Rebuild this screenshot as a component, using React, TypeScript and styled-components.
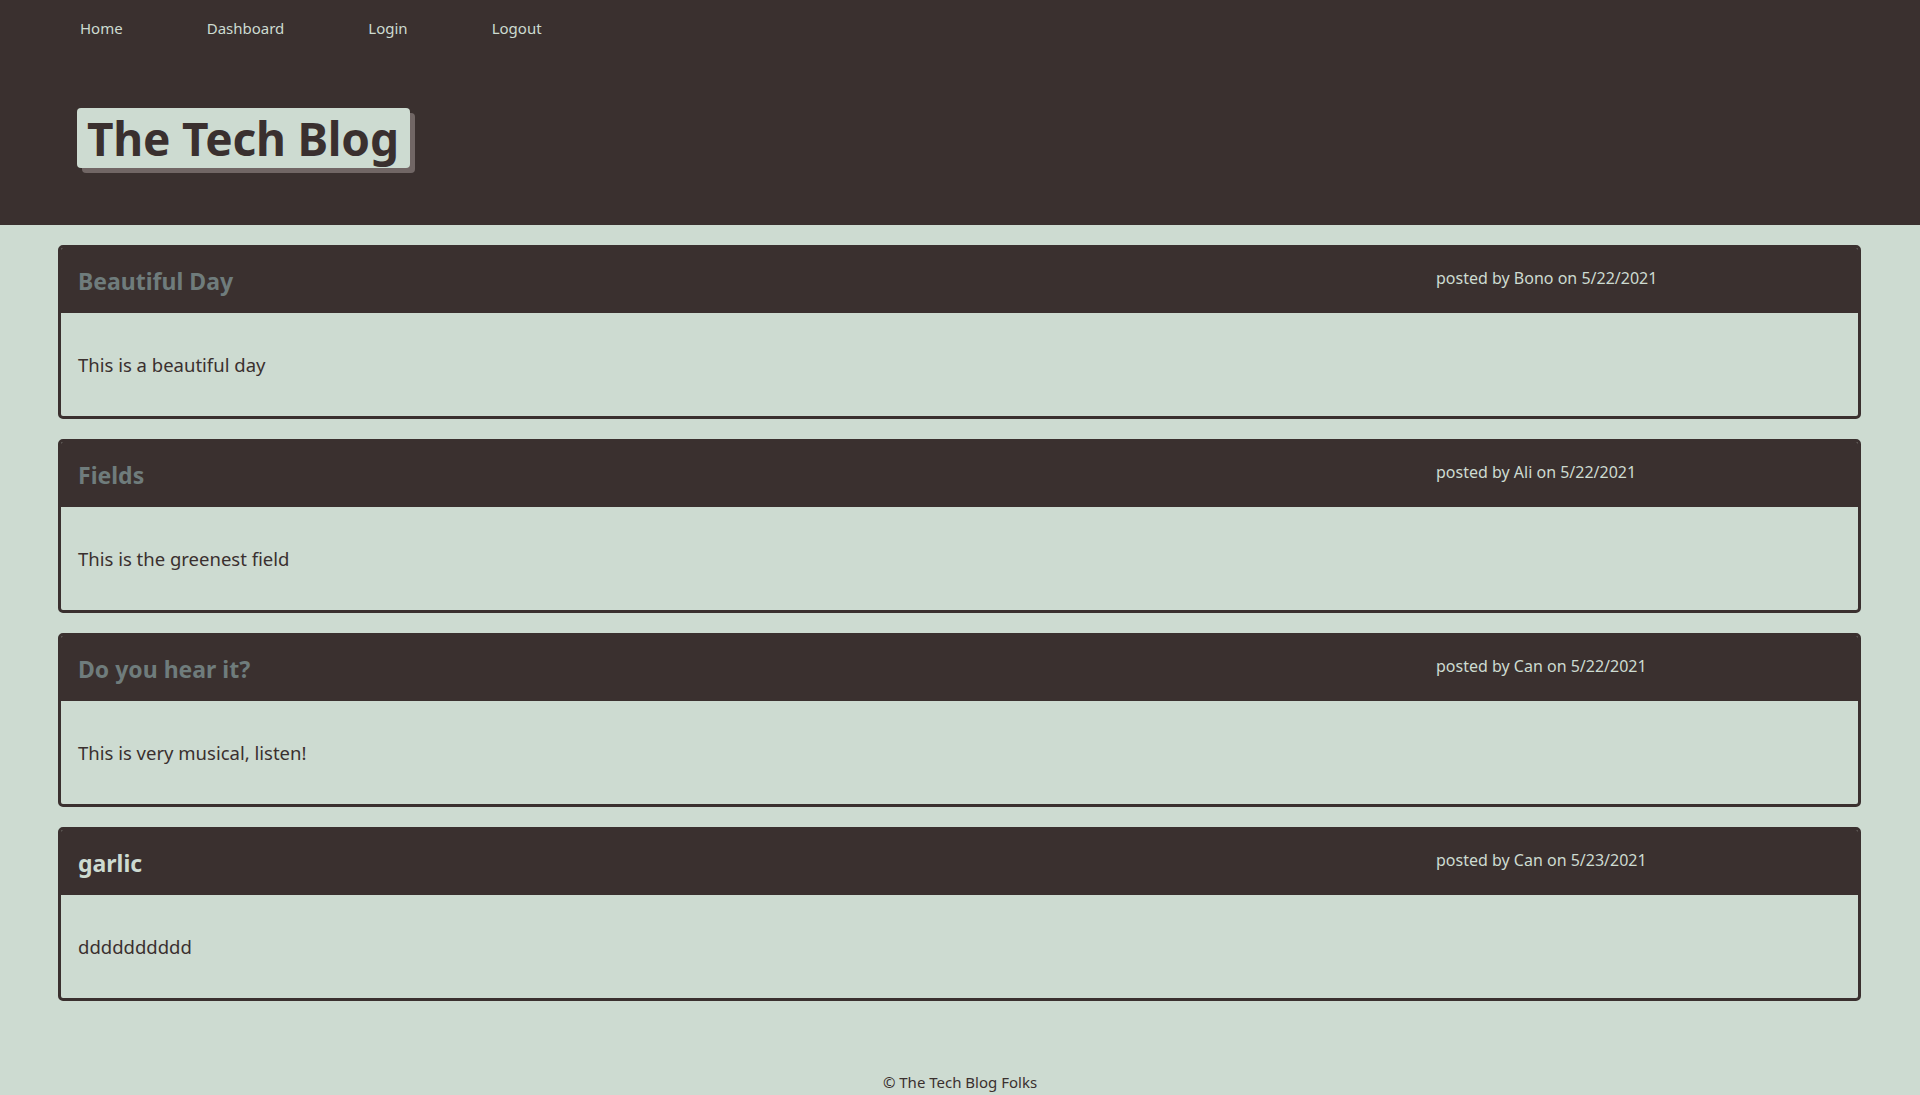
import React, { FC } from 'react';
import styled, { createGlobalStyle } from 'styled-components';

const DARK = '#3a302f';
const LIGHT = '#cddbd1';

const GlobalStyle = createGlobalStyle`
  html, body {
    margin: 0;
    padding: 0;
    background-color: ${LIGHT};
    font-family: "Noto Sans", "Open Sans", sans-serif;
    color: ${DARK};
  }
`;

const Page = styled.div`
  min-height: 1095px;
  display: flex;
  flex-direction: column;
`;

const Header = styled.header`
  background-color: ${DARK};
  height: 225px;
  box-sizing: border-box;
  padding: 15px 0 0 80px;
`;

const Nav = styled.nav`
  display: flex;
  gap: 84px;
`;

const NavLink = styled.a`
  color: ${LIGHT};
  font-size: 15px;
  text-decoration: none;
  line-height: 26px;
  cursor: pointer;
`;

const TitleBox = styled.h1`
  display: inline-block;
  margin: 67px 0 0 -3px;
  padding: 0 11px 0 10px;
  height: 60px;
  line-height: 60px;
  font-size: 46px;
  letter-spacing: -0.2px;
  font-weight: 700;
  color: ${DARK};
  background-color: ${LIGHT};
  border-radius: 4px;
  box-shadow: 5px 5px 0 #716665;
`;

const Main = styled.main`
  display: flex;
  flex-direction: column;
  gap: 20px;
  padding: 20px 59px 0 58px;
`;

const Card = styled.article`
  border: 3px solid ${DARK};
  border-radius: 5px;
  overflow: hidden;
`;

const CardHeader = styled.div`
  background-color: ${DARK};
  height: 65px;
  display: grid;
  grid-template-columns: 1fr 422px;
  align-items: start;
  padding: 0 0 0 17px;
  box-sizing: border-box;
`;

const PostTitle = styled.a<{ $visited?: boolean }>`
  font-size: 23px;
  font-weight: 700;
  line-height: 32px;
  margin-top: 17px;
  color: ${({ $visited }) => ($visited ? '#6f7c7c' : LIGHT)};
  text-decoration: none;
  cursor: pointer;
`;

const Meta = styled.span`
  font-size: 16px;
  line-height: 22px;
  margin-top: 19px;
  color: ${LIGHT};
`;

const CardBody = styled.div`
  height: 103px;
  display: flex;
  align-items: center;
  padding: 0 17px;
  font-size: 18.5px;
  color: ${DARK};
`;

const Footer = styled.footer`
  margin-top: auto;
  text-align: center;
  font-size: 15px;
  line-height: 24px;
  padding-bottom: 1px;
`;

const posts = [
  { title: 'Beautiful Day', author: 'Bono', date: '5/22/2021', body: 'This is a beautiful day', visited: true },
  { title: 'Fields', author: 'Ali', date: '5/22/2021', body: 'This is the greenest field', visited: true },
  { title: 'Do you hear it?', author: 'Can', date: '5/22/2021', body: 'This is very musical, listen!', visited: true },
  { title: 'garlic', author: 'Can', date: '5/23/2021', body: 'dddddddddd', visited: false },
];

const App: FC = () => {
  return (
    <Page>
      <GlobalStyle />
      <Header>
        <Nav>
          <NavLink>Home</NavLink>
          <NavLink>Dashboard</NavLink>
          <NavLink>Login</NavLink>
          <NavLink>Logout</NavLink>
        </Nav>
        <TitleBox>The Tech Blog</TitleBox>
      </Header>
      <Main>
        {posts.map((post) => (
          <Card key={post.title}>
            <CardHeader>
              <PostTitle $visited={post.visited}>{post.title}</PostTitle>
              <Meta>posted by {post.author} on {post.date}</Meta>
            </CardHeader>
            <CardBody>{post.body}</CardBody>
          </Card>
        ))}
      </Main>
      <Footer>© The Tech Blog Folks</Footer>
    </Page>
  );
};

export default App;
